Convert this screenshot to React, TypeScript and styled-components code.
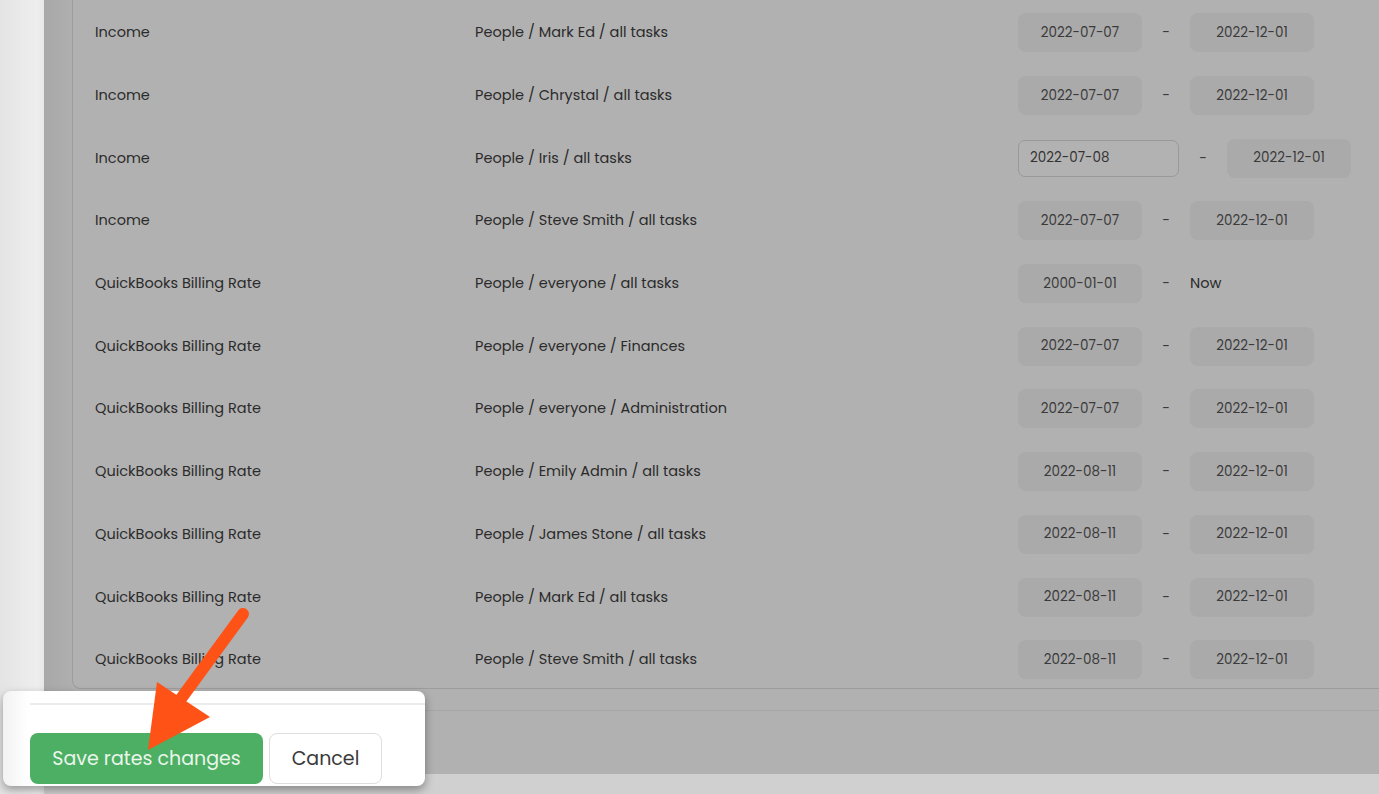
import React from "react";
import styled, { createGlobalStyle } from "styled-components";

const GlobalStyle = createGlobalStyle`
  html, body { margin: 0; padding: 0; }
  body {
    background: #e9e9e9;
    overflow: hidden;
    font-family: "Poppins", "Inter", "Open Sans", "Liberation Sans", sans-serif;
  }
`;

const Page = styled.div`
  position: relative;
  width: 1379px;
  height: 794px;
  display: flex;
  overflow: hidden;
`;

const Gutter = styled.div`
  width: 44px;
  flex: none;
  background: linear-gradient(90deg, #e4e4e4 0%, #eeeeee 85%, #e6e6e6 100%);
`;

const MainCol = styled.div`
  flex: 1;
  display: flex;
  flex-direction: column;
`;

const Modal = styled.div`
  height: 774px;
  background: #b1b1b1;
  display: flex;
  flex-direction: column;
  padding-left: 28px;
  background-image: linear-gradient(90deg, #a8a8a8 0px, #afafaf 28px, #b1b1b1 28px);
`;

const BottomStrip = styled.div`
  flex: 1;
  background: #d0d0d0;
`;

const Card = styled.div`
  height: 689px;
  flex: none;
  padding-top: 1.5px;
  box-sizing: border-box;
  border: 1px solid #9d9d9d;
  border-top: none;
  border-right: none;
  border-bottom-left-radius: 8px;
  background: #b1b1b1;
  display: flex;
  flex-direction: column;
  overflow: hidden;
`;

const Row = styled.div`
  height: 62.7px;
  flex: none;
  display: grid;
  grid-template-columns: 380px 543px 1fr;
  align-items: center;
  padding-left: 22px;
  color: #2b2b2b;
  font-size: 14.5px;
`;

const Cell = styled.div`
  white-space: nowrap;
`;

const DateCell = styled.div`
  display: flex;
  align-items: center;
`;

const Pill = styled.div`
  width: 124px;
  height: 39px;
  border-radius: 8px;
  background: #aaaaaa;
  display: flex;
  align-items: center;
  justify-content: center;
  font-size: 13.5px;
  color: #3a3a3a;
`;

const DateInput = styled.div`
  box-sizing: border-box;
  width: 161px;
  height: 37px;
  border-radius: 7px;
  border: 1px solid #999999;
  background: #b2b2b2;
  display: flex;
  align-items: center;
  padding-left: 11px;
  font-size: 13.5px;
  color: #333333;
`;

const Dash = styled.div`
  width: 48px;
  text-align: center;
  color: #3a3a3a;
  font-size: 14px;
`;

const NowText = styled.div`
  font-size: 14.5px;
  color: #2b2b2b;
`;

const Footer = styled.div`
  flex: 1;
  border-top: 1px solid #a6a6a6;
  margin-top: 21px;
`;

const Callout = styled.div`
  position: absolute;
  left: 3px;
  top: 691px;
  width: 422px;
  height: 95px;
  background: #ffffff;
  border-radius: 8px;
  box-shadow: 0 4px 10px rgba(0, 0, 0, 0.35);
  display: flex;
  flex-direction: column;
  padding-left: 27px;
  box-sizing: border-box;
  background-image: linear-gradient(90deg, #f2f2f2 0px, #ffffff 25px);
`;

const CalloutLine = styled.div`
  margin-top: 12px;
  height: 2px;
  background: #ececec;
`;

const ButtonRow = styled.div`
  margin-top: 28px;
  display: flex;
  gap: 6px;
`;

const SaveButton = styled.button`
  width: 233px;
  height: 51px;
  border: none;
  border-radius: 8px;
  background: #4caf63;
  color: #eaf6ec;
  font-family: inherit;
  font-size: 19px;
  padding: 0;
`;

const CancelButton = styled.button`
  width: 113px;
  height: 51px;
  border: 1px solid #dedede;
  border-radius: 8px;
  background: #ffffff;
  color: #3a3a3a;
  font-family: inherit;
  font-size: 19px;
  padding: 0;
`;

const ArrowSvg = styled.svg`
  position: absolute;
  left: 0;
  top: 0;
  pointer-events: none;
`;

type RowData = {
  type: string;
  path: string;
  from: string;
  to: string;
  editing?: boolean;
};

const QB = "QuickBooks Billing Rate";
const rows: RowData[] = [
  { type: "Income", path: "People / Mark Ed / all tasks", from: "2022-07-07", to: "2022-12-01" },
  { type: "Income", path: "People / Chrystal / all tasks", from: "2022-07-07", to: "2022-12-01" },
  { type: "Income", path: "People / Iris / all tasks", from: "2022-07-08", to: "2022-12-01", editing: true },
  { type: "Income", path: "People / Steve Smith / all tasks", from: "2022-07-07", to: "2022-12-01" },
  { type: QB, path: "People / everyone / all tasks", from: "2000-01-01", to: "Now" },
  { type: QB, path: "People / everyone / Finances", from: "2022-07-07", to: "2022-12-01" },
  { type: QB, path: "People / everyone / Administration", from: "2022-07-07", to: "2022-12-01" },
  { type: QB, path: "People / Emily Admin / all tasks", from: "2022-08-11", to: "2022-12-01" },
  { type: QB, path: "People / James Stone / all tasks", from: "2022-08-11", to: "2022-12-01" },
  { type: QB, path: "People / Mark Ed / all tasks", from: "2022-08-11", to: "2022-12-01" },
  { type: QB, path: "People / Steve Smith / all tasks", from: "2022-08-11", to: "2022-12-01" },
];

export default function App() {
  return (
    <>
      <GlobalStyle />
      <Page>
        <Gutter />
        <MainCol>
          <Modal>
            <Card>
              {rows.map((r, i) => (
                <Row key={i}>
                  <Cell>{r.type}</Cell>
                  <Cell>{r.path}</Cell>
                  <DateCell>
                    {r.editing ? <DateInput>{r.from}</DateInput> : <Pill>{r.from}</Pill>}
                    <Dash>-</Dash>
                    {r.to === "Now" ? <NowText>Now</NowText> : <Pill>{r.to}</Pill>}
                  </DateCell>
                </Row>
              ))}
            </Card>
            <Footer />
          </Modal>
          <BottomStrip />
        </MainCol>
        <Callout>
          <CalloutLine />
          <ButtonRow>
            <SaveButton>Save rates changes</SaveButton>
            <CancelButton>Cancel</CancelButton>
          </ButtonRow>
        </Callout>
        <ArrowSvg width="1379" height="794" viewBox="0 0 1379 794">
          <line x1="243" y1="614" x2="180" y2="700" stroke="#fe5216" strokeWidth="12" strokeLinecap="round" />
          <polygon points="157,682 210,717 148,750" fill="#fe5216" />
        </ArrowSvg>
      </Page>
    </>
  );
}
